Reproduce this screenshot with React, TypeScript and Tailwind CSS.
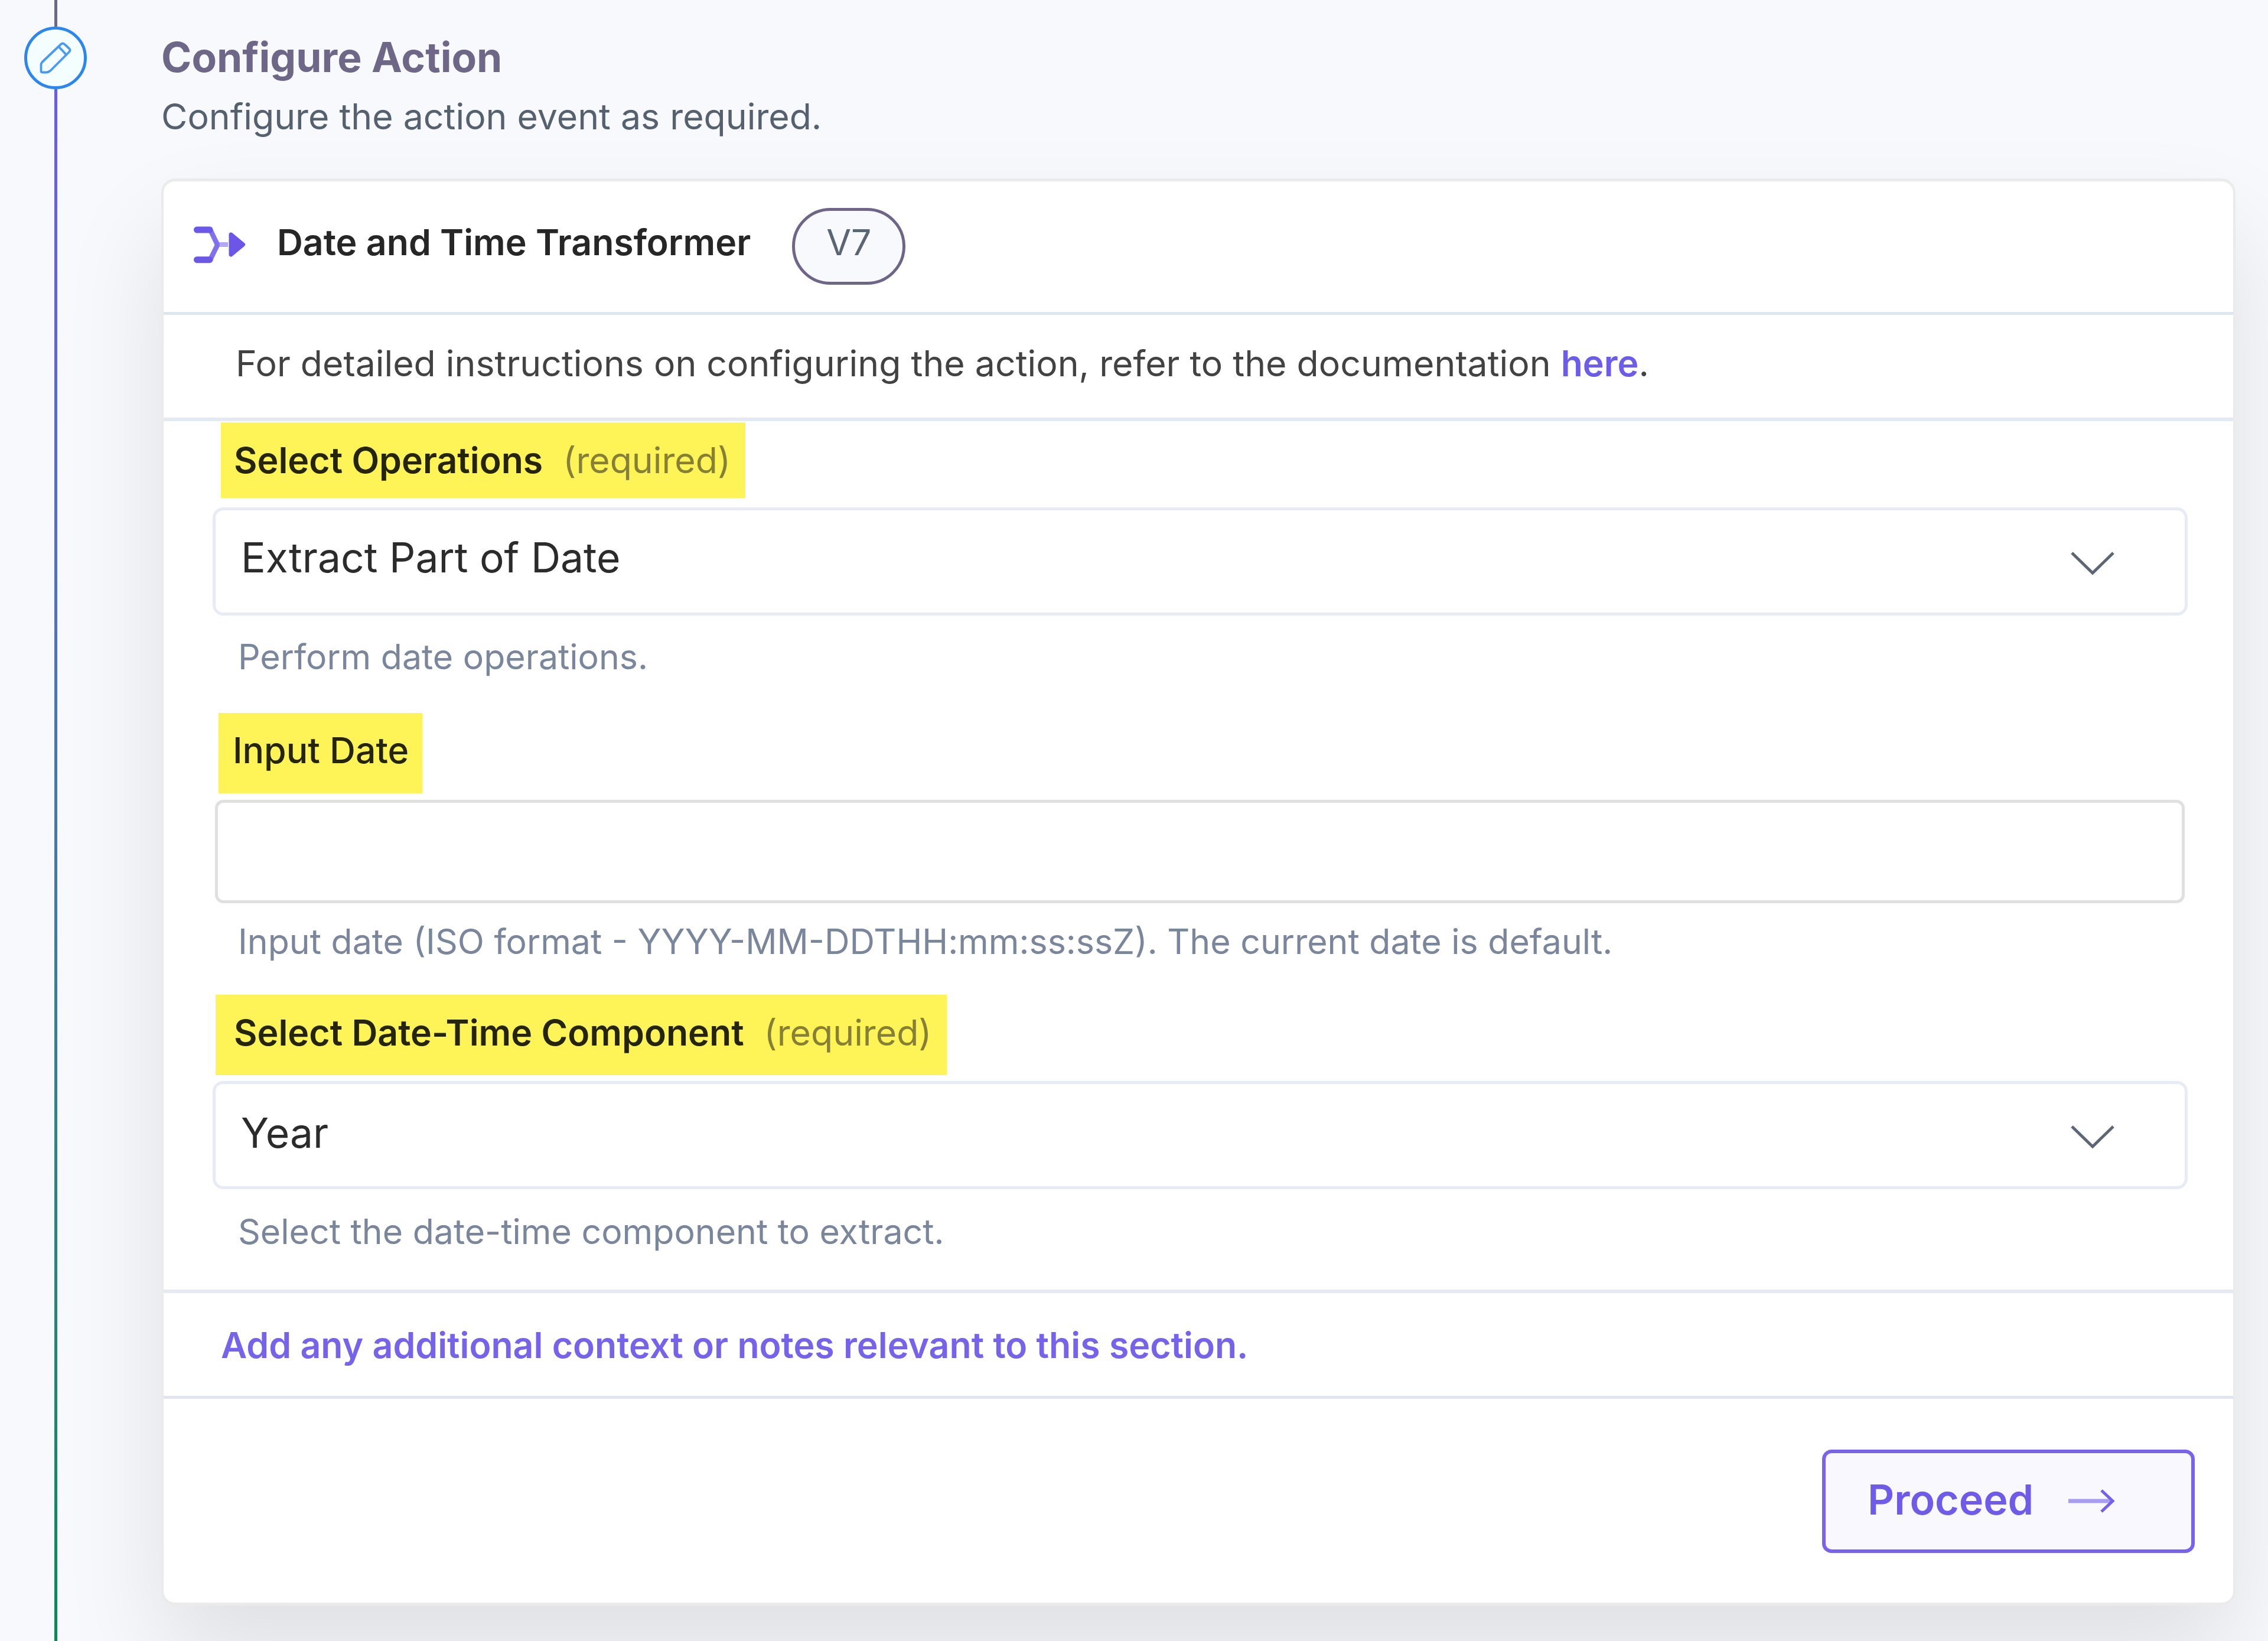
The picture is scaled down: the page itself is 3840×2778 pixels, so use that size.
import type { ReactNode } from "react";

function PencilIcon() {
  return (
    <svg className="w-[60px] h-[60px] shrink-0" viewBox="0 0 60 60" fill="none" stroke="#4b98f2" strokeWidth="3.8" strokeLinejoin="round">
      <path d="M8 54.500 Q5.500 54.500 5.500 52 V42 Q5.500 39 7.500 37 L39 7 Q42.500 4 46 7.500 L53 14 Q56 17 53 20 L22 51 Q18 54.500 14 54.500 Z" />
      <path d="M35.500 11 L48.500 25" />
    </svg>
  );
}

function MergeIcon() {
  return (
    <svg className="w-[90px] h-[68px] shrink-0" viewBox="0 0 90 68" fill="none" strokeLinecap="round" strokeLinejoin="round">
      <path d="M43 33 H60" stroke="#b3a8f5" strokeWidth="8" strokeLinecap="butt" />
      <path d="M30 8 L41.500 32 V35 L30 58.500" stroke="#8271ee" strokeWidth="8.5" />
      <path d="M7.500 8 H29 M7.500 58.700 H29" stroke="#6c58e8" strokeWidth="11" />
      <path d="M65 16 L85.500 33 L65 50 Z" fill="#6c56e8" stroke="#6c56e8" strokeWidth="7" />
    </svg>
  );
}

function ChevronIcon() {
  return (
    <svg className="w-[76px] h-[44px]" viewBox="0 0 76 44" fill="none" stroke="#5d6675" strokeWidth="5">
      <path d="M3 4 L38 38 L73 4" />
    </svg>
  );
}

function ArrowIcon() {
  return (
    <svg className="w-[80px] h-[44px]" viewBox="0 0 80 44" fill="none">
      <path d="M1 22 H74" stroke="#a79bf3" strokeWidth="7" />
      <path d="M57 4 L76 22 L57 40" stroke="#7460ea" strokeWidth="5" />
    </svg>
  );
}

function SelectBox({ children, className }: { children: ReactNode; className: string }) {
  return (
    <div className={`ml-[83px] w-[3344px] flex justify-between rounded-[18px] border-[5px] border-[#e6ebf5] pl-[43px] pr-[118px] text-[#2b2b2b] ${className}`}>
      <span className="text-[69.500px]">{children}</span>
      <span className="pt-[68px] leading-none">
        <ChevronIcon />
      </span>
    </div>
  );
}

export default function App() {
  return (
    <div className="flex h-[2778px] w-[3840px] overflow-hidden bg-[#f8f9fd] font-['Inter',sans-serif]">
      <div className="flex w-[188px] shrink-0 flex-col items-center">
        <div className="h-[45px] w-[5px] bg-[#6b6a85]" />
        <div className="flex h-[106px] w-[106px] shrink-0 items-center justify-center rounded-full border-[5px] border-[#2b86f0] bg-[#f5feff]">
          <PencilIcon />
        </div>
        <div className="w-[5px] flex-1 bg-linear-to-b from-[#6b5ce7] to-[#0f8554]" />
      </div>

      <div className="ml-[85px] pt-[52px]">
        <h1 className="h-[90px] text-[69.500px] leading-[90px] font-bold text-[#6f6788] whitespace-nowrap">Configure Action</h1>
        <p className="mt-[10px] h-[90px] text-[60.750px] leading-[90px] text-[#56616f] whitespace-nowrap">
          Configure the action event as required.
        </p>

        <div className="mt-[60px] h-[2416px] w-[3512px] rounded-[24px] border-x-4 border-y-[5px] border-[#ebebeb] bg-white shadow-[0_86px_172px_rgba(0,0,0,0.1)]">
          <div className="flex h-[226px] border-b-[5px] border-[#dee6f0] pl-[49px]">
            <span className="pt-[74px]">
              <MergeIcon />
            </span>
            <h2 className="ml-[53px] text-[60.750px] leading-[206px] font-semibold text-[#262626] whitespace-nowrap">
              Date and Time Transformer
            </h2>
            <span className="mt-[45px] ml-[70px] flex h-[130px] w-[192px] justify-center rounded-full border-[5px] border-[#6f6588] bg-[#f8f9fd] text-[60.750px] leading-[106px] text-[#5b6674]">
              V7
            </span>
          </div>

          <div className="h-[180px] border-b-[6px] border-[#e4eaf4] pl-[122px] text-[60.750px] leading-[164px] text-[#424242] whitespace-nowrap">
            For detailed instructions on configuring the action, refer to the documentation{" "}
            <a className="font-semibold text-[#6c5ceb]">here</a>.
          </div>

          <div className="h-[1476px] border-b-[6px] border-[#e6ebf3] pt-[2px] whitespace-nowrap">
            <div className="ml-[97px] h-[128px] w-[888px] bg-[#fff457] pl-[22px] text-[60.750px] leading-[128px] text-[#25240d]">
              <span className="font-semibold">Select Operations</span>
              <span className="ml-[34px] text-[#868036]">(required)</span>
            </div>
            <SelectBox className="mt-[16px] h-[183px] leading-[161px]">Extract Part of Date</SelectBox>
            <p className="mt-[30px] ml-[126px] h-[80px] text-[59px] leading-[80px] text-[#7a869c]">Perform date operations.</p>

            <div className="mt-[55px] ml-[93px] h-[136px] w-[345px] bg-[#fff457] pl-[24px] text-[60.750px] leading-[127px] font-medium text-[#25240d]">
              Input Date
            </div>
            <div className="mt-[11px] ml-[87px] h-[175px] w-[3335px] rounded-[14px] border-[5px] border-[#e0e0e0]" />
            <p className="mt-[25px] ml-[126px] h-[80px] text-[59px] leading-[80px] text-[#7a869c]">
              Input date (ISO format - YYYY-MM-DDTHH:mm:ss:ssZ). The current date is default.
            </p>

            <div className="mt-[50px] ml-[88px] h-[136px] w-[1238px] bg-[#fff457] pl-[31px] text-[60.750px] leading-[128px] text-[#25240d]">
              <span className="font-semibold">Select Date-Time Component</span>
              <span className="ml-[34px] text-[#868036]">(required)</span>
            </div>
            <SelectBox className="mt-[10px] h-[183px] leading-[167px]">Year</SelectBox>
            <p className="mt-[32px] ml-[126px] h-[80px] text-[59px] leading-[80px] text-[#7a869c]">
              Select the date-time component to extract.
            </p>
          </div>

          <div className="h-[179px] border-b-[5px] border-[#dfe5f1] pl-[97px] text-[60.750px] leading-[176px] font-semibold text-[#7563eb] whitespace-nowrap">
            Add any additional context or notes relevant to this section.
          </div>

          <div className="flex justify-end pt-[86px] pr-[65px]">
            <button className="flex h-[175px] w-[631px] rounded-[16px] border-[6px] border-[#7864ec] bg-[#f9f8ff] pl-[71px] text-[70px] leading-[158px] font-semibold text-[#6f5be9]">
              Proceed
              <span className="ml-[58px] pt-[59px] leading-none">
                <ArrowIcon />
              </span>
            </button>
          </div>
        </div>
      </div>
    </div>
  );
}
